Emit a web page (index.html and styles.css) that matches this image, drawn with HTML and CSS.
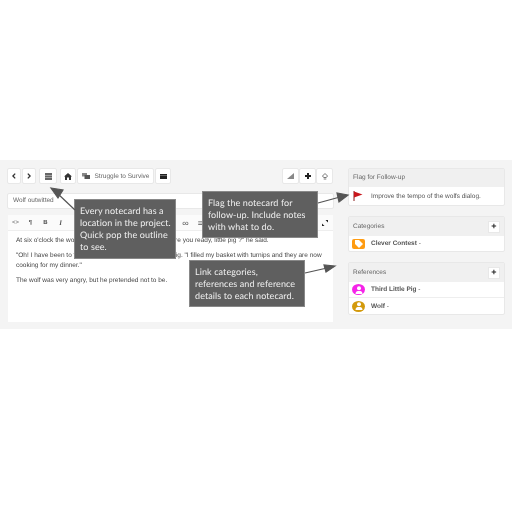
FILE: index.html
```html
<!DOCTYPE html>
<html lang="en">
<head>
    <meta charset="UTF-8">
    <meta name="viewport" content="width=device-width, initial-scale=1.0">
    <title>Notecard</title>
    <link rel="stylesheet" href="styles.css">
</head>
<body>
    <div class="band">
        <div class="main">
            <div class="toolbar">
                <div class="group">
                    <span class="btn small"><svg width="4" height="6" viewBox="0 0 4 6"><path d="M3.200.6.9 3l2.300 2.400" fill="none" stroke="#333" stroke-width="1.300"/></svg></span>
                    <span class="btn small"><svg width="4" height="6" viewBox="0 0 4 6"><path d="M.8.6 3.100 3 .8 5.400" fill="none" stroke="#333" stroke-width="1.300"/></svg></span>
                </div>
                <div class="group">
                    <span class="btn list"><svg width="7" height="7" viewBox="0 0 7 7"><path d="M0 0h7v7H0z" fill="#666"/><path d="M0 2.200h7v.5H0zM0 4.400h7v.5H0z" fill="#ddd"/></svg></span>
                </div>
                <div class="group">
                    <span class="btn home"><svg width="8" height="7" viewBox="0 0 8 7"><path d="M4 0 8 3.600H7V7H5V4.600H3V7H1V3.600H0z" fill="#333"/></svg></span>
                    <span class="btn crumb"><svg width="8" height="6" viewBox="0 0 8 6"><path d="M0 0h5v3.500H0z" fill="#888"/><path d="M2.500 2H8v4H2.500z" fill="#555"/></svg>Struggle to Survive</span>
                    <span class="btn home"><svg width="7" height="5" viewBox="0 0 7 5"><path d="M0 0h7v5H0z" fill="#222"/><path d="M0 1.300h7v.5H0z" fill="#aaa"/></svg></span>
                </div>
                <div class="group push">
                    <span class="btn wide"><svg width="7" height="6" viewBox="0 0 7 6"><path d="M0 6 7 0v6z" fill="#888"/></svg></span>
                    <span class="btn wide"><svg width="6" height="6" viewBox="0 0 6 6"><path d="M2 0h2v2h2v2H4v2H2V4H0V2h2z" fill="#222"/></svg></span>
                    <span class="btn wide"><svg width="6" height="7" viewBox="0 0 6 7"><path d="M3 .5 5.500 3 4.300 4.500H1.700L.5 3zM1.700 6h2.600" fill="none" stroke="#777"/></svg></span>
                </div>
            </div>
            <div class="title">Wolf outwitted</div>
            <div class="editor">
                <div class="edit-bar">
                    <span class="tool">&lt;&gt;</span>
                    <span class="tool bold">¶</span>
                    <span class="tool bold">B</span>
                    <span class="tool ital">I</span>
                    <span class="tool link first">∞</span>
                    <span class="tool link">≡</span>
                    <svg class="expand" width="6" height="6" viewBox="0 0 6 6"><path d="M3.500 0H6v2.500zM0 6V3.500L2.500 6z" fill="#222"/></svg>
                </div>
                <div class="edit-body">
                    <p>At six o'clock the wolf came to the little pig's cottage. "Are you ready, little pig ?" he said.</p>
                    <p>"Oh! I have been to the market so early," said the little pig. "I filled my basket with turnips and they are now<br>cooking for my dinner."</p>
                    <p>The wolf was very angry, but he pretended not to be.</p>
                </div>
            </div>
        </div>
        <div class="side">
            <section class="panel">
                <h3 class="panel-head">Flag for Follow-up</h3>
                <div class="row flag-row">
                    <svg class="flag" width="10" height="10" viewBox="0 0 10 10"><path d="M1 0v10" stroke="#8a1a1a" stroke-width="1"/><path d="M1 .5 9.500 3.500 1 6.500z" fill="#c8161c"/></svg>
                    <span>Improve the tempo of the wolfs dialog.</span>
                </div>
            </section>
            <section class="panel">
                <h3 class="panel-head tall">Categories<span class="add">+</span></h3>
                <div class="row">
                    <span class="badge tag"><svg width="8" height="8" viewBox="0 0 8 8"><path d="M0 0h4l4 4-4 4-4-4z" fill="#fff"/></svg></span>
                    <span><b>Clever Contest</b> -</span>
                </div>
            </section>
            <section class="panel">
                <h3 class="panel-head tall">References<span class="add">+</span></h3>
                <div class="row">
                    <span class="badge person pink"><svg width="8" height="8" viewBox="0 0 8 8"><circle cx="4" cy="2.300" r="2" fill="#fff"/><path d="M.5 8c0-2.500 1.500-3 3.500-3s3.500.5 3.500 3z" fill="#fff"/></svg></span>
                    <span><b>Third Little Pig</b> -</span>
                </div>
                <div class="row line">
                    <span class="badge person gold"><svg width="8" height="8" viewBox="0 0 8 8"><circle cx="4" cy="2.300" r="2" fill="#fff"/><path d="M.5 8c0-2.500 1.500-3 3.500-3s3.500.5 3.500 3z" fill="#fff"/></svg></span>
                    <span><b>Wolf</b> -</span>
                </div>
            </section>
        </div>
        <div class="note note-a">Every notecard has a<br>location in the project.<br>Quick pop the outline<br>to see.</div>
        <div class="note note-b">Flag the notecard for<br>follow-up. Include notes<br>with what to do.</div>
        <div class="note note-c">Link categories,<br>references and reference<br>details to each notecard.</div>
        <svg class="arrows" width="512" height="169" viewBox="0 160 512 169">
            <g stroke="#555" stroke-width="1.200" fill="#555">
                <path d="M75 210 57 193"/>
                <path d="M51 188 63 190 58 198z"/>
                <path d="M318 203 340 197"/>
                <path d="M348 195 337 193 339 202z"/>
                <path d="M305 273 327 268"/>
                <path d="M335 266 324 265 326 272z"/>
            </g>
        </svg>
    </div>
</body>
</html>
```

FILE: styles.css
```css
html, body {
    margin: 0;
    padding: 0;
    background: #fff;
}
body {
    font-family: 'Liberation Sans', Arial, sans-serif;
    color: #444;
    font-size: 6.500px;
    padding-top: 160px;
    text-rendering: geometricPrecision;
}
.band {
    position: relative;
    height: 169px;
    box-sizing: border-box;
    background: #f4f4f4;
    padding: 8px 7px;
    display: flex;
    gap: 14px;
    filter: blur(0.5px);
}
.main {
    width: 327px;
}
.toolbar {
    display: flex;
    gap: 3px;
    height: 16px;
}
.group {
    display: flex;
    gap: 1px;
}
.push {
    margin-left: auto;
    margin-right: 1px;
    gap: 0;
}
.btn {
    display: flex;
    align-items: center;
    justify-content: center;
    gap: 5px;
    height: 16px;
    background: #fff;
    border: 1px solid #e8e8e8;
    border-radius: 2px;
    box-sizing: border-box;
    font-size: 6.500px;
    color: #666;
}
.small {
    width: 14px;
}
.list {
    width: 18px;
}
.home {
    width: 16px;
}
.wide {
    width: 17px;
}
.crumb {
    width: 77px;
}
.title {
    margin-top: 9px;
    height: 16px;
    line-height: 14px;
    box-sizing: border-box;
    padding-left: 5px;
    background: #fff;
    border: 1px solid #e8e8e8;
    border-radius: 2px;
    color: #666;
}
.editor {
    margin-top: 6px;
    margin-left: 1px;
    margin-right: 1px;
    background: #fff;
}
.edit-bar {
    display: flex;
    align-items: center;
    height: 15px;
    background: #fbfbfb;
    border-bottom: 1px solid #eee;
    color: #555;
}
.tool {
    width: 15px;
    text-align: center;
    font-size: 6px;
}
.tool.bold {
    font-weight: bold;
}
.tool.ital {
    font-style: italic;
    font-weight: bold;
    font-family: 'Liberation Serif', serif;
    font-size: 7px;
}
.tool.link {
    font-size: 9px;
}
.tool.first {
    margin-left: 110px;
}
.expand {
    margin-left: auto;
    margin-right: 5px;
}
.edit-body {
    height: 91px;
    box-sizing: border-box;
    padding: 5px 8px 0;
    line-height: 10.500px;
    color: #444;
}
.edit-body p {
    margin: 0 0 4px;
}
.side {
    width: 157px;
}
.panel {
    background: #fff;
    border: 1px solid #e8e8e8;
    border-radius: 2px;
    box-sizing: border-box;
    margin-bottom: 10px;
}
.panel-head {
    margin: 0;
    height: 18px;
    line-height: 18px;
    padding: 0 4px;
    background: #f0f0f0;
    font-size: 6.500px;
    font-weight: normal;
    color: #666;
    display: flex;
    justify-content: space-between;
    align-items: center;
}
.panel-head.tall {
    height: 19px;
}
.add {
    width: 10px;
    height: 10px;
    line-height: 9px;
    background: #fff;
    border: 1px solid #e8e8e8;
    text-align: center;
    font-size: 9px;
    font-weight: bold;
    color: #222;
}
.row {
    display: flex;
    align-items: center;
    gap: 6px;
    min-height: 15px;
    padding: 0 3px;
    color: #555;
}
.flag-row {
    min-height: 18px;
}
.row.line {
    min-height: 16px;
    border-top: 1px solid #eee;
}
.flag {
    margin-left: 1px;
    margin-right: 2px;
}
.badge {
    width: 13px;
    height: 10px;
    display: flex;
    align-items: center;
    justify-content: center;
}
.tag {
    background: #ff9c12;
    border-radius: 2px;
}
.person {
    border-radius: 50%;
    height: 11px;
}
.pink {
    background: #f523e8;
}
.gold {
    background: #d39a0c;
}
.note {
    position: absolute;
    box-sizing: border-box;
    background: #5f5f5f;
    border: 1px solid #888;
    color: #f0f0f0;
    font-family: Lato, 'Open Sans', sans-serif;
    font-size: 9px;
    line-height: 12px;
    letter-spacing: 0.1px;
    padding: 5px 5px;
    white-space: nowrap;
}
.note-a {
    left: 74px;
    top: 39px;
    width: 102px;
    height: 60px;
}
.note-b {
    left: 202px;
    top: 31px;
    width: 116px;
    height: 47px;
}
.note-c {
    left: 189px;
    top: 100px;
    width: 116px;
    height: 47px;
}
.arrows {
    position: absolute;
    left: 0;
    top: 0;
}
```
